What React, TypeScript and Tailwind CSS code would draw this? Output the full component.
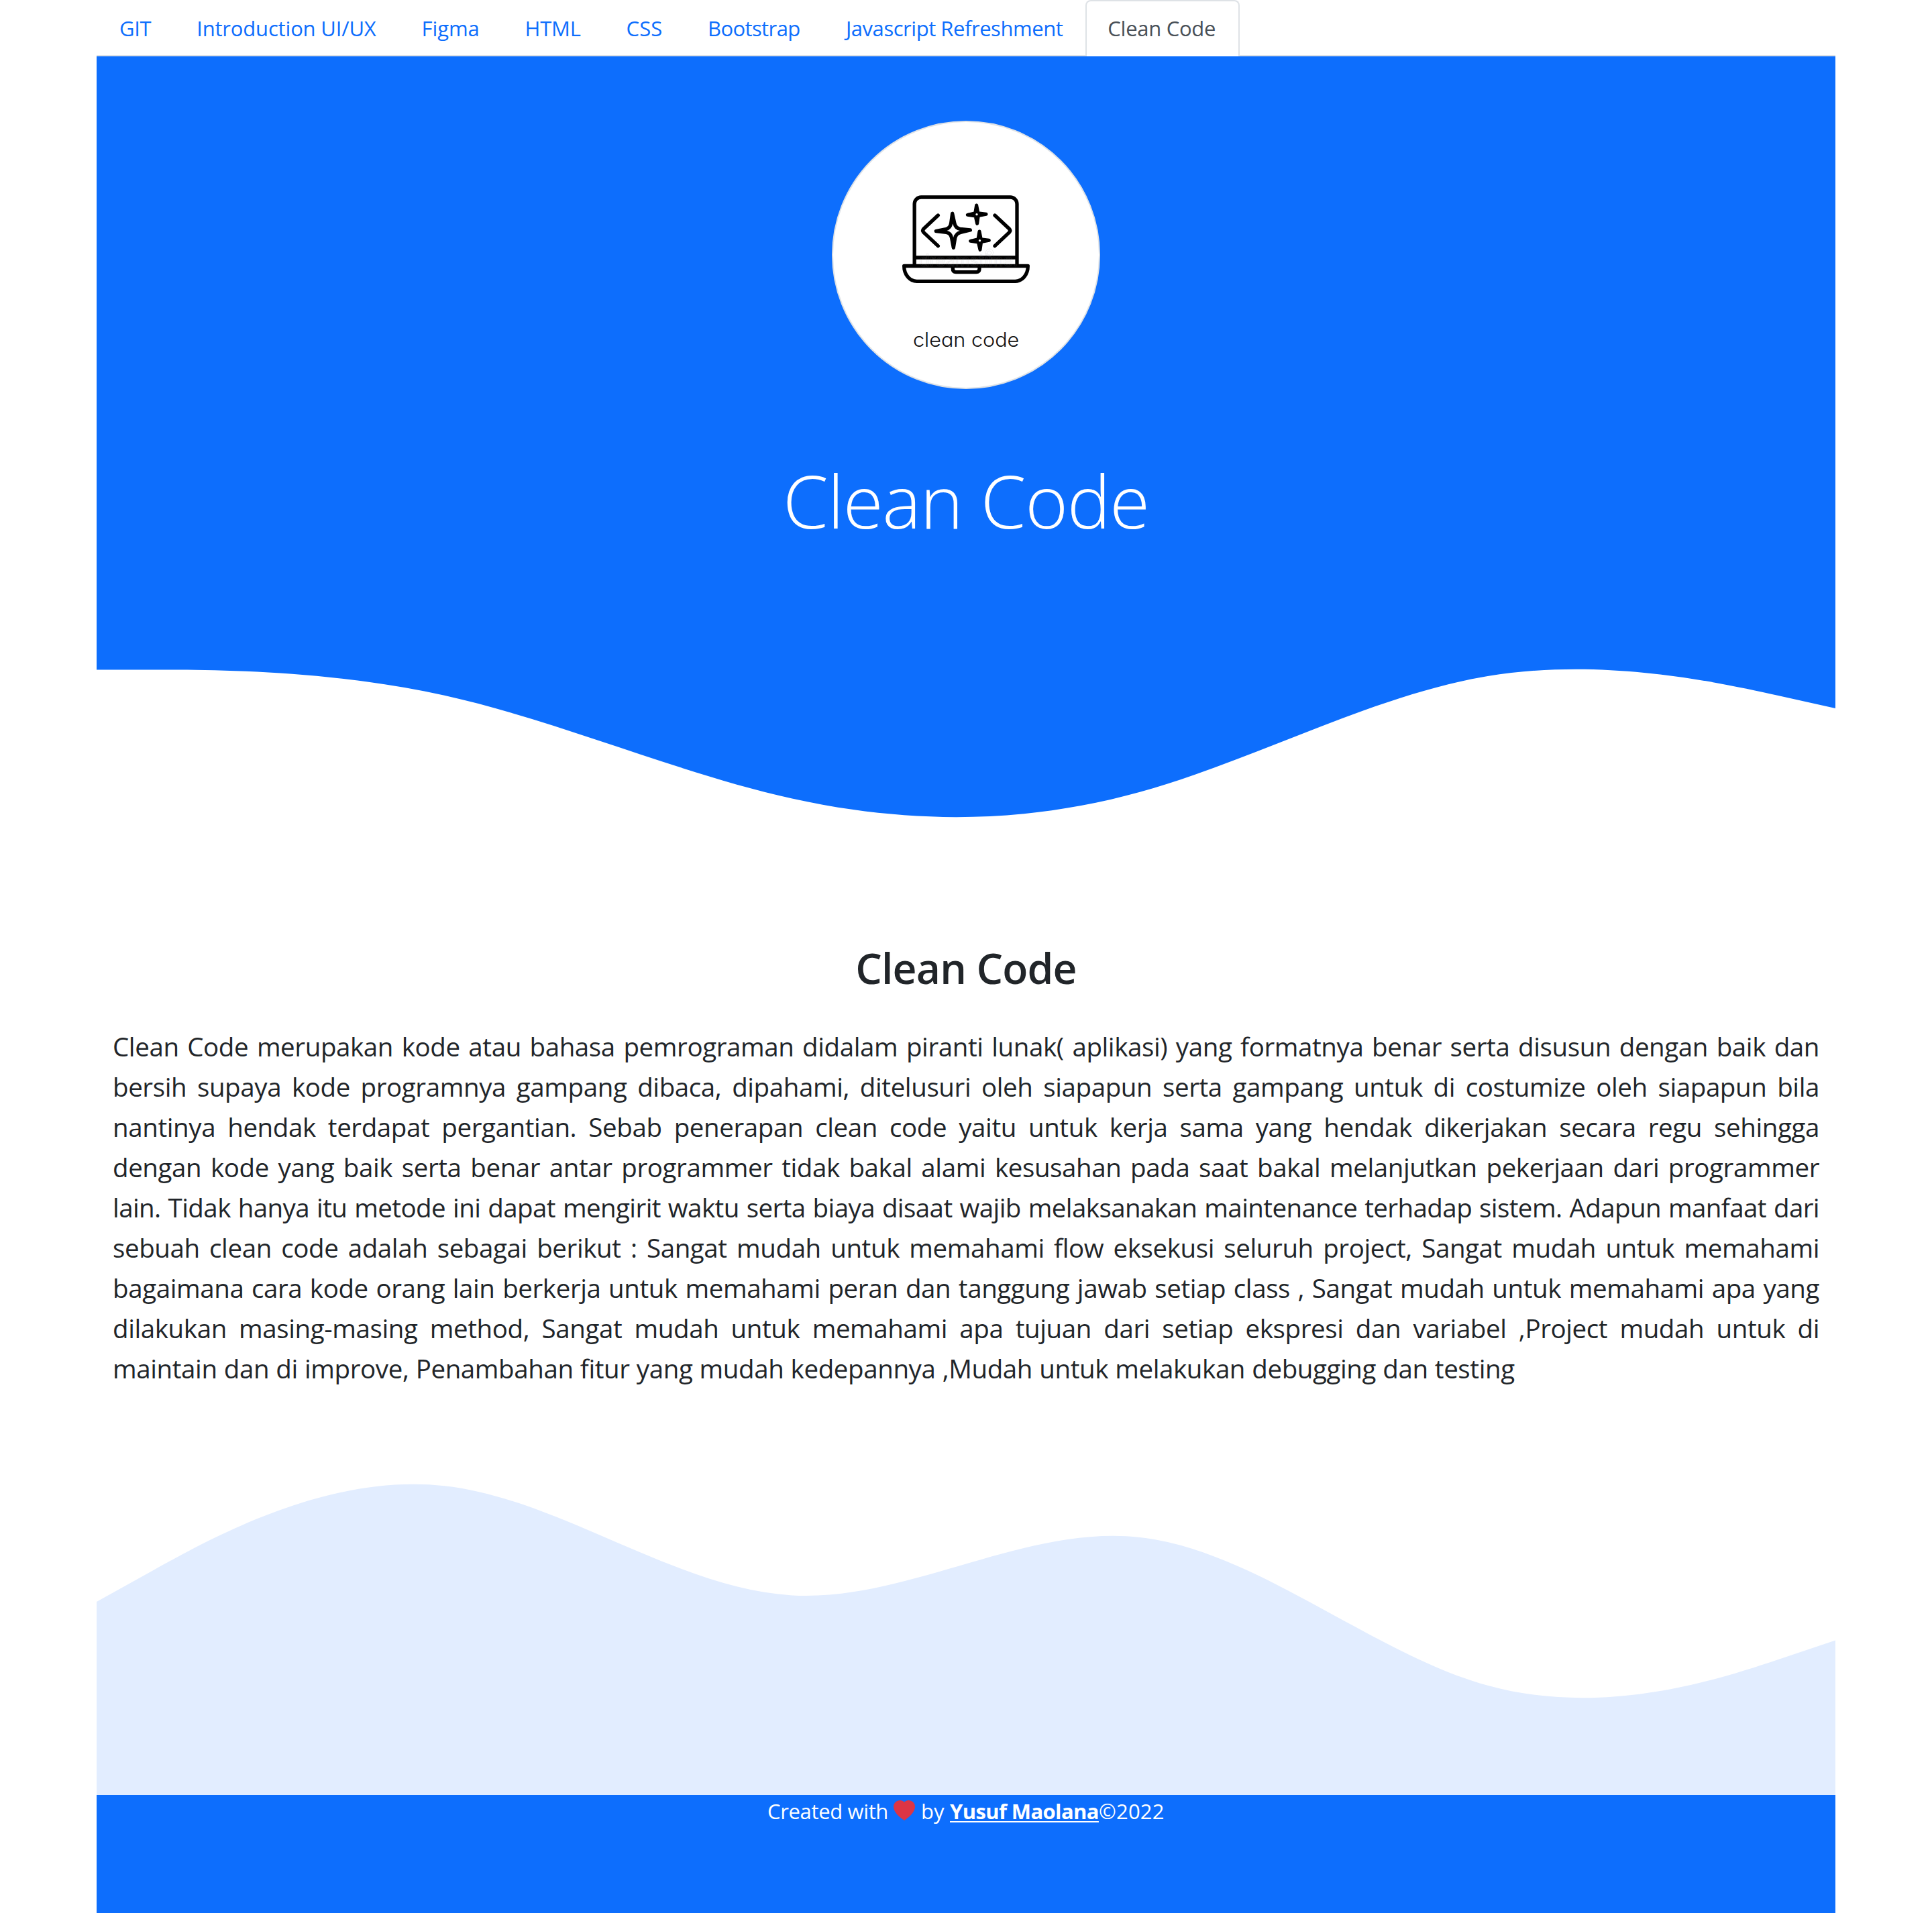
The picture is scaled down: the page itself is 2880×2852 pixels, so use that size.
import React from "react";

const tabs = [
  { label: "GIT", size: "w-[115.2px] tracking-[-0.37px]" },
  { label: "Introduction UI/UX", size: "w-[335.4px] tracking-[-0.18px]" },
  { label: "Figma", size: "w-[154px] tracking-[-0.1px]" },
  { label: "HTML", size: "w-[151px] tracking-[-0.25px]" },
  { label: "CSS", size: "w-[121.4px] tracking-[0.1px]" },
  { label: "Bootstrap", size: "w-[206px] tracking-[-0.6px]" },
  { label: "Javascript Refreshment", size: "w-[391.4px] tracking-[-0.46px]" },
  { label: "Clean Code", size: "w-[229.2px] tracking-[-0.28px]", active: true },
];

const lines = [
  "Clean Code merupakan kode atau bahasa pemrograman didalam piranti lunak( aplikasi) yang formatnya benar serta disusun dengan baik dan",
  "bersih supaya kode programnya gampang dibaca, dipahami, ditelusuri oleh siapapun serta gampang untuk di costumize oleh siapapun bila",
  "nantinya hendak terdapat pergantian. Sebab penerapan clean code yaitu untuk kerja sama yang hendak dikerjakan secara regu sehingga",
  "dengan kode yang baik serta benar antar programmer tidak bakal alami kesusahan pada saat bakal melanjutkan pekerjaan dari programmer",
  "lain. Tidak hanya itu metode ini dapat mengirit waktu serta biaya disaat wajib melaksanakan maintenance terhadap sistem. Adapun manfaat dari",
  "sebuah clean code adalah sebagai berikut : Sangat mudah untuk memahami flow eksekusi seluruh project, Sangat mudah untuk memahami",
  "bagaimana cara kode orang lain berkerja untuk memahami peran dan tanggung jawab setiap class , Sangat mudah untuk memahami apa yang",
  "dilakukan masing-masing method, Sangat mudah untuk memahami apa tujuan dari setiap ekspresi dan variabel ,Project mudah untuk di",
  "maintain dan di improve, Penambahan fitur yang mudah kedepannya ,Mudah untuk melakukan debugging dan testing",
];

function Tabs() {
  return (
    <ul className="flex h-[84px] border-b-2 border-[#dee2e6] text-[31px] leading-[48px]">
      {tabs.map((tab) => (
        <li key={tab.label} className={`-mb-0.5 shrink-0 ${tab.size}`}>
          <a
            href="#"
            className={
              tab.active
                ? "block h-[84px] whitespace-nowrap rounded-t-[8px] border-2 border-b-0 border-[#dee2e6] bg-white pl-[31px] pt-4 text-[#495057]"
                : "block h-[82px] whitespace-nowrap border-2 border-transparent pl-8 pt-4 text-[#0d6efd]"
            }
          >
            {tab.label}
          </a>
        </li>
      ))}
    </ul>
  );
}

function CleanCodeLogo() {
  return (
    <svg viewBox="66 66 1188 1188" className="size-full" fill="none" stroke="#000" strokeLinecap="round" strokeLinejoin="round">
      <g strokeWidth="16">
        <path d="M429.500 703V432a30 30 0 0 1 30-30H858a30 30 0 0 1 30 30V703" strokeLinecap="butt" />
        <path d="M430 672H888" strokeLinecap="butt" />
        <path d="M383 709.500H937C937 750 910 778 880 778H440C410 778 383 750 383 709.500Z" />
        <path d="M601 714v9q0 14 14 14h91q14 0 14-14v-9" strokeLinecap="butt" />
        <path d="M535 483L471 543q-8 8 0 17L535 620" />
        <path d="M789 483L853 543q8 8 0 17L789 620" />
        <path d="M599 475L593 518Q590 540 570 545L526 554L572 559Q592 562 596 585L604 628L611 585Q615 564 636 559L679 549L634 544Q614 541 609 520Z" />
      </g>
      <g fill="#000" strokeWidth="15">
        <path d="M707 438L701 473L667 481L702 486L710 520L715 485L750 478L714 473Z" />
        <path d="M720 555L714 590L680 598L715 603L723 637L728 602L763 595L727 590Z" />
      </g>
      <g fill="#fff" stroke="none">
        <circle cx="708" cy="479" r="5" />
        <circle cx="721.500" cy="596" r="5" />
      </g>
      <g stroke="#999" strokeWidth="2" opacity="0.22">
        <text x="450" y="711" fontSize="76" textLength="442" className="font-['Inter']">dreamstime.</text>
        <circle cx="765" cy="650" r="17" />
        <circle cx="764" cy="651" r="9" />
      </g>
      <text
        x="423"
        y="1070"
        fontSize="88"
        fill="#111"
        stroke="none"
        textLength="475"
        lengthAdjust="spacingAndGlyphs"
        className="font-['Inter'] font-[350] [font-feature-settings:'cv11']"
      >
        clean code
      </text>
    </svg>
  );
}

function Hero() {
  return (
    <header>
      <div className="flex h-[879px] flex-col items-center bg-[#0d6efd] pt-24">
        <div className="size-[400px] overflow-hidden rounded-full border-2 border-[#dee2e6] bg-white">
          <CleanCodeLogo />
        </div>
        <h1 className="mt-[99px] whitespace-nowrap text-[109px] font-light leading-[134px] tracking-[-1.3px] text-white">Clean Code</h1>
      </div>
      <svg viewBox="0 -20.25 1440 160" className="-mt-px block h-[288px] w-full">
        <path
          fill="#0d6efd"
          d="M0,-20.25V0L48,0C96,0,192,0,288,21.33C384,42.67,480,85.33,576,106.67C672,128,768,128,864,101.33C960,74.67,1056,21.33,1152,5.33C1248,-10.67,1344,10.67,1392,21.33L1440,32V-20.25Z"
        />
      </svg>
    </header>
  );
}

function Article() {
  return (
    <section className="px-6 pt-[154px] text-[#212529]">
      <h2 className="text-center text-[62.5px] font-semibold leading-[77px] tracking-[-0.85px]">Clean Code</h2>
      <p className="mt-[49px] text-[38.5px] leading-[60px] tracking-[-0.4px] [word-spacing:0.6px]">
        {lines.map((line, i) => (
          <span
            key={line}
            className={
              i === lines.length - 1
                ? "block whitespace-nowrap"
                : i === 4
                  ? "block text-justify tracking-[-0.58px] [text-align-last:justify]"
                  : "block text-justify [text-align-last:justify]"
            }
          >
            {line}
          </span>
        ))}
      </p>
    </section>
  );
}

function Footer() {
  return (
    <footer className="flex h-[176px] items-start justify-center whitespace-nowrap bg-[#0d6efd] text-[31px] leading-[48px] text-white">
      <span className="w-[180px] tracking-[-0.35px]">Created with</span>
      <svg viewBox="0 0 16 16" className="ml-2 mt-2 size-8" fill="#dc3545">
        <path fillRule="evenodd" d="M8 1.314C12.438-3.248 23.534 4.735 8 15-7.534 4.736 3.562-3.248 8 1.314z" />
      </svg>
      <span className="ml-[9px] w-[43px]">by</span>
      <a href="#" className="w-[222px] font-bold tracking-[-0.62px] underline decoration-2 underline-offset-[3px]">Yusuf Maolana</a>
      <span className="w-[98px] tracking-[0.2px]">©2022</span>
    </footer>
  );
}

export default function App() {
  return (
    <div className="flex min-h-[2852px] justify-center bg-white font-['Open_Sans','Noto_Sans',sans-serif]">
      <div className="flex w-[2592px] flex-col">
        <Tabs />
        <Hero />
        <Article />
        <svg viewBox="0 0 1440 320" className="mt-auto block h-[576px] w-full shrink-0">
          <path
            fill="#e2edff"
            d="M0,160L48,133.33C96,106.67,192,53.33,288,64C384,74.67,480,149.33,576,154.67C672,160,768,96,864,106.67C960,117.33,1056,202.67,1152,229.33C1248,256,1344,224,1392,208L1440,192V320H0Z"
          />
        </svg>
        <Footer />
      </div>
    </div>
  );
}
